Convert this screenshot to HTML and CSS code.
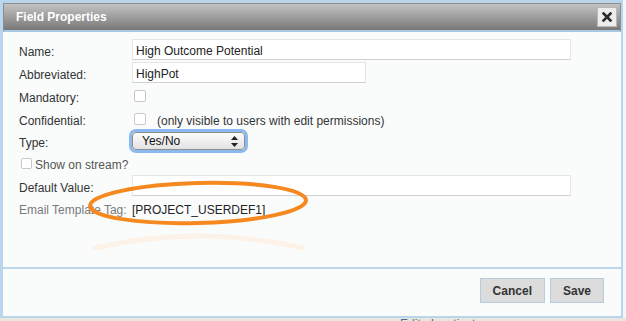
FILE: index.html
```html
<!DOCTYPE html>
<html lang="en">
<head>
    <meta charset="UTF-8">
    <meta name="viewport" content="width=device-width, initial-scale=1.0">
    <title>Field Properties</title>
    <link rel="stylesheet" href="styles.css">
</head>
<body>
    <div class="dialog">
        <div class="titlebar">
            <span class="title">Field Properties</span>
            <button class="close" aria-label="Close">
                <svg width="10" height="10" viewBox="0 0 10 10">
                    <path d="M1.5 1.5 L8.5 8.5 M8.5 1.5 L1.5 8.5" stroke="#2b2b2b" stroke-width="2.6" stroke-linecap="square"/>
                </svg>
            </button>
        </div>

        <div class="content">
            <div class="form">
                <label class="label">Name:</label>
                <div class="field"><input type="text" class="input input-wide" value="High Outcome Potential"></div>

                <label class="label">Abbreviated:</label>
                <div class="field"><input type="text" class="input input-short" value="HighPot"></div>

                <label class="label">Mandatory:</label>
                <div class="field"><span class="checkbox"></span></div>

                <label class="label">Confidential:</label>
                <div class="field"><span class="checkbox"></span><span class="note">(only visible to users with edit permissions)</span></div>

                <label class="label">Type:</label>
                <div class="field">
                    <div class="select">
                        <span>Yes/No</span>
                        <svg width="7" height="11" viewBox="0 0 7 11">
                            <path d="M3.5 0 L7 4 L0 4 Z M3.5 11 L7 7 L0 7 Z" fill="#222"/>
                        </svg>
                    </div>
                </div>

                <div class="row-full"><span class="checkbox checkbox-left"></span><span class="stream">Show on stream?</span></div>

                <label class="label">Default Value:</label>
                <div class="field"><input type="text" class="input input-wide" value=""></div>

                <label class="label label-muted">Email Template Tag:</label>
                <div class="field"><span class="tag">[PROJECT_USERDEF1]</span></div>
            </div>

            <!-- hand-drawn highlight over the tag row -->
            <svg class="annotation" width="340" height="230" viewBox="0 0 340 230">
                <path d="M92 216 Q 195 192 300 216" fill="none" stroke="#fdf2e7" stroke-width="5" stroke-linecap="round"/>
                <ellipse cx="195" cy="171" rx="108" ry="20" fill="none" stroke="#f5891f" stroke-width="4" transform="rotate(-1.5 195 171)"/>
            </svg>
        </div>

        <div class="footer">
            <button class="btn">Cancel</button>
            <button class="btn">Save</button>
        </div>
    </div>

    <div class="under">
        <span class="under-link">Edit</span>
        <span class="under-link">Inactivate</span>
    </div>
</body>
</html>
```

FILE: styles.css
```css
body {
    margin: 0;
    padding: 0;
    background-color: #f3f6f8;
    font-family: "Liberation Sans", Arial, sans-serif;
    font-size: 12px;
    color: #333;
    overflow: hidden;
}
.dialog {
    width: 618px;
    border: 3px solid #b9d6ec;
    border-right-width: 2px;
    border-bottom-width: 2px;
    background-color: #fafcfc;
}
.titlebar {
    height: 26px;
    display: flex;
    align-items: center;
    padding: 0 3px 0 12px;
    border: 1px solid #8d8d8d;
    border-bottom: 2px solid #a9c9e2;
    background: linear-gradient(#c3c3c3, #787878);
}
.title {
    color: #fff;
    font-weight: bold;
    font-size: 12px;
}
.close {
    margin-left: auto;
    width: 20px;
    height: 20px;
    padding: 0;
    border: 1px solid #b8b8b8;
    background-color: #ececec;
    display: flex;
    align-items: center;
    justify-content: center;
}
.content {
    position: relative;
    height: 229px;
    padding-top: 6px;
    border-bottom: 2px solid #bcd6ea;
}
.form {
    display: grid;
    grid-template-columns: 113px 1fr;
    grid-template-rows: 23px 23px 24px 22px 22px 22px 23px 22px;
    align-items: center;
    padding-left: 16px;
}
.label {
    padding-top: 4px;
    color: #333;
}
.label-muted {
    color: #7a7a7a;
}
.field {
    display: flex;
    align-items: center;
}
.input {
    box-sizing: border-box;
    height: 21px;
    padding: 2px 3px 0;
    margin: 0;
    border: 1px solid #e6e6e6;
    border-bottom-color: #d0d0d0;
    background-color: #fff;
    font-family: "Liberation Sans", Arial, sans-serif;
    font-size: 12px;
    color: #222;
    outline: none;
}
.input-wide {
    width: 439px;
}
.input-short {
    width: 234px;
}
.checkbox {
    box-sizing: border-box;
    width: 12px;
    height: 12px;
    margin-left: 2px;
    border: 1px solid #c9c9c9;
    border-radius: 2px;
    background-color: #fff;
}
.checkbox-left {
    width: 11px;
    height: 11px;
}
.note {
    margin-left: 11px;
    padding-top: 4px;
    color: #333;
}
.select {
    box-sizing: border-box;
    width: 113px;
    height: 18px;
    display: flex;
    align-items: center;
    justify-content: space-between;
    padding: 0 6px 0 9px;
    border: 1px solid #8e8e8e;
    border-radius: 4px;
    background: linear-gradient(#fdfdfd, #e2e2e2);
    box-shadow: 0 0 0 3px #8bbaf0;
    color: #111;
}
.row-full {
    grid-column: 1 / -1;
    display: flex;
    align-items: center;
}
.stream {
    margin-left: 3px;
    padding-top: 4px;
    color: #555;
}
.tag {
    padding-top: 4px;
    color: #222;
}
.annotation {
    position: absolute;
    left: 0;
    top: 0;
    pointer-events: none;
}
.footer {
    height: 47px;
    box-sizing: border-box;
    display: flex;
    justify-content: flex-end;
    align-items: flex-start;
    gap: 5px;
    padding: 9px 17px 0 0;
}
.btn {
    height: 25px;
    padding: 0 12px;
    border: 1px solid #b7cce0;
    background-color: #dcdcdc;
    font-family: "Liberation Sans", Arial, sans-serif;
    font-weight: bold;
    font-size: 12px;
    color: #333;
}
.under {
    height: 10px;
    background-color: #ebe6dd;
    padding-left: 400px;
    line-height: 12px;
    font-size: 12px;
    color: #4b6b8c;
    display: flex;
    gap: 10px;
}
```
